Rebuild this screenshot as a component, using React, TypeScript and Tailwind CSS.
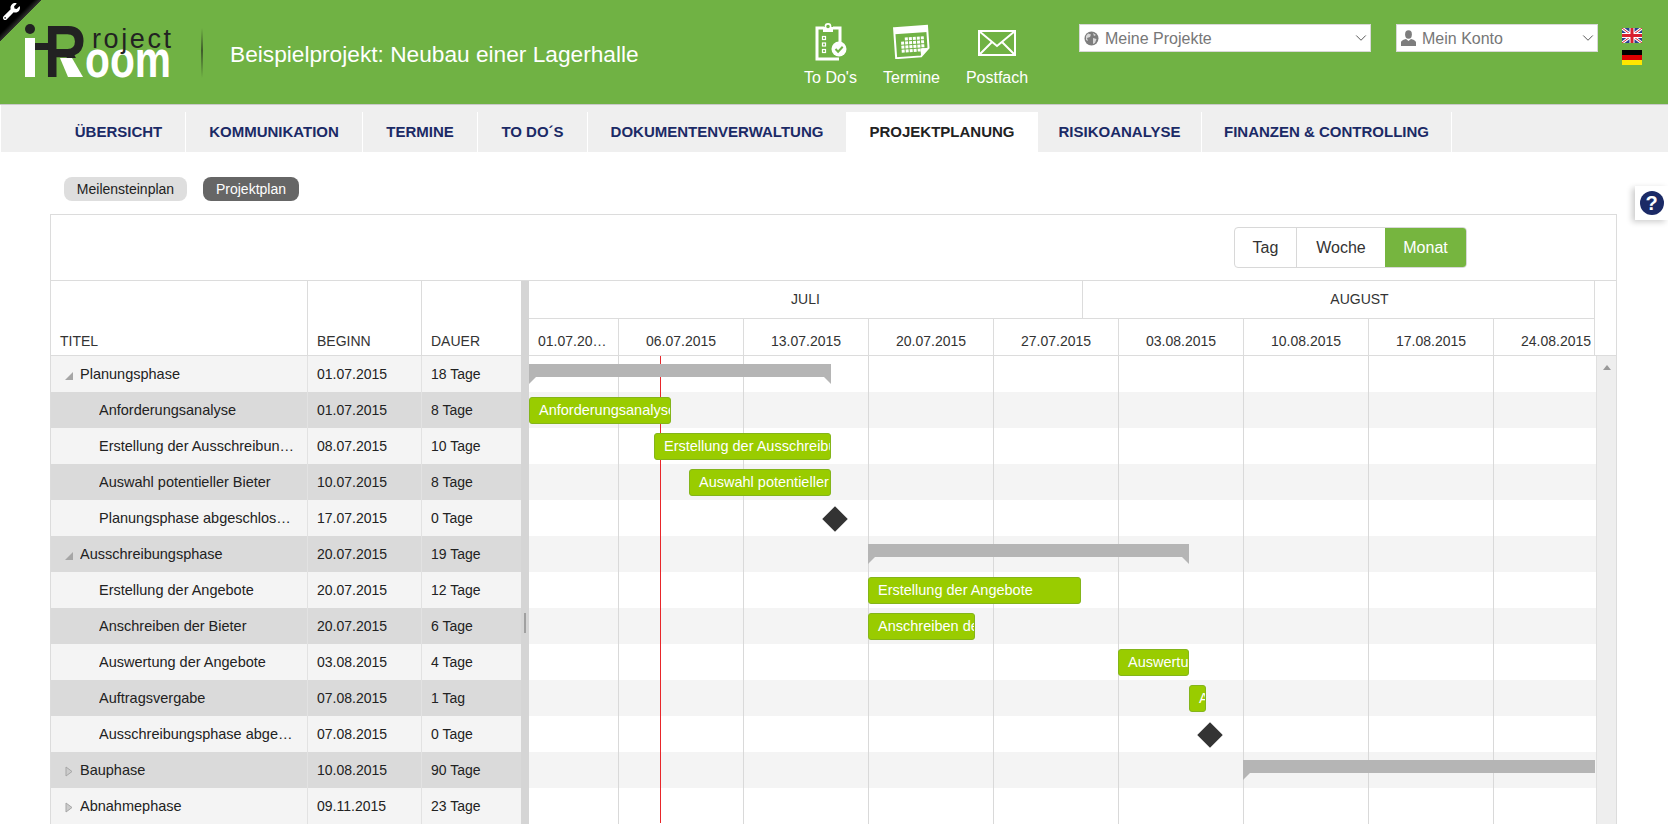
import React from "react";
import { ChevronDown } from "lucide-react";
import { FaWrench } from "react-icons/fa";

const tabs = [
  { label: "ÜBERSICHT", width: "w-[134px]" },
  { label: "KOMMUNIKATION", width: "w-[177px]" },
  { label: "TERMINE", width: "w-[115px]" },
  { label: "TO DO´S", width: "w-[110px]" },
  { label: "DOKUMENTENVERWALTUNG", width: "w-[259px]" },
  { label: "PROJEKTPLANUNG", width: "w-[191px]", active: true },
  { label: "RISIKOANALYSE", width: "w-[164px]" },
  { label: "FINANZEN & CONTROLLING", width: "w-[250px]" },
];

const rows = [
  { title: "Planungsphase", start: "01.07.2015", days: "18 Tage", open: true, summary: [0, 302, true] },
  { title: "Anforderungsanalyse", start: "01.07.2015", days: "8 Tage", bar: [0, 142] },
  { title: "Erstellung der Ausschreibungsunterlagen", start: "08.07.2015", days: "10 Tage", bar: [125, 177] },
  { title: "Auswahl potentieller Bieter", start: "10.07.2015", days: "8 Tage", bar: [160, 142] },
  { title: "Planungsphase abgeschlossen", start: "17.07.2015", days: "0 Tage", diamond: 297 },
  { title: "Ausschreibungsphase", start: "20.07.2015", days: "19 Tage", open: true, summary: [339, 321, true] },
  { title: "Erstellung der Angebote", start: "20.07.2015", days: "12 Tage", bar: [339, 213] },
  { title: "Anschreiben der Bieter", start: "20.07.2015", days: "6 Tage", bar: [339, 107] },
  { title: "Auswertung der Angebote", start: "03.08.2015", days: "4 Tage", bar: [589, 71] },
  { title: "Auftragsvergabe", start: "07.08.2015", days: "1 Tag", bar: [660, 17] },
  { title: "Ausschreibungsphase abgeschlossen", start: "07.08.2015", days: "0 Tage", diamond: 672 },
  { title: "Bauphase", start: "10.08.2015", days: "90 Tage", closed: true, summary: [714, 352, false] },
  { title: "Abnahmephase", start: "09.11.2015", days: "23 Tage", closed: true },
];

const dates = ["06.07.2015", "13.07.2015", "20.07.2015", "27.07.2015", "03.08.2015", "10.08.2015", "17.08.2015"];

function Logo() {
  return (
    <svg width="152" height="60" viewBox="0 0 152 60" className="mt-[22px] ml-[24px] shrink-0" fontFamily="'Liberation Sans', sans-serif">
      <defs>
        <clipPath id="r-top">
          <polygon points="0,0 70,0 70,36 35,36 35,60 0,60" />
        </clipPath>
      </defs>
      <circle cx="6" cy="7" r="5" fill="#222" />
      <rect x="1" y="16" width="10" height="39" fill="#fff" />
      <rect x="11" y="21" width="14" height="7" fill="#222" />
      <g clipPath="url(#r-top)">
        <text x="0" y="0" fontSize="74" fontWeight="700" fill="#222" transform="translate(20,55) scale(0.8,1)">R</text>
      </g>
      <polygon points="36,36 48,36 59,55 44,55" fill="#fff" />
      <text x="61" y="55" fontSize="52" fontWeight="700" fill="#fff" textLength="86" lengthAdjust="spacingAndGlyphs">oom</text>
      <text x="68" y="26" fontSize="27" fill="#222" textLength="79" lengthAdjust="spacing">roject</text>
    </svg>
  );
}

function ClipboardIcon() {
  return (
    <svg width="32" height="38" viewBox="0 0 32 38" fill="none" stroke="#fff">
      <path d="M9 5H2v31h22" strokeWidth="3" />
      <path d="M18 5h7v15" strokeWidth="3" />
      <rect x="8" y="4" width="10" height="5" fill="#fff" strokeWidth="0" />
      <circle cx="13" cy="3.5" r="2.6" fill="#70b244" strokeWidth="1.6" />
      <rect x="7.5" y="13.5" width="3" height="3" strokeWidth="1.2" />
      <rect x="7.5" y="20" width="3" height="3" strokeWidth="1.2" />
      <rect x="7.5" y="26.5" width="3" height="3" strokeWidth="1.2" />
      <circle cx="24" cy="26" r="7.5" fill="#fff" strokeWidth="0" />
      <path d="M20.5 26l2.6 2.8 4.6-5" stroke="#70b244" strokeWidth="2" />
    </svg>
  );
}

function CalendarIcon() {
  const cells = [];
  for (let r = 0; r < 4; r++) {
    for (let c = 0; c < 6; c++) {
      if (r === 0 && c === 0) continue;
      cells.push(<rect key={r + "-" + c} x={8 + c * 4} y={14 + r * 4} width="3" height="3" fill="#fff" />);
    }
  }
  return (
    <svg width="38" height="36" viewBox="0 0 38 36">
      <g transform="rotate(-4 19 18)">
        <path d="M2 4h33v22l-8 8H2z" fill="none" stroke="#fff" strokeWidth="2" />
        <rect x="2" y="4" width="33" height="6" fill="#fff" />
        <path d="M27 34v-8h8z" fill="#fff" />
        {cells}
      </g>
    </svg>
  );
}

function EnvelopeIcon() {
  return (
    <svg width="38" height="26" viewBox="0 0 38 26" fill="none" stroke="#fff" strokeWidth="2">
      <rect x="1" y="1" width="36" height="24" />
      <path d="M1 1l18 15L37 1M1 25l13-13M37 25L24 12" />
    </svg>
  );
}

function GlobeIcon() {
  return (
    <svg width="15" height="15" viewBox="0 0 15 15" className="shrink-0">
      <circle cx="7.5" cy="7.5" r="7" fill="#7d7d7d" />
      <path d="M4 2.5l3 1-1 2.5-3 1 1 3-2-1V5zM9 7l3.5 1-1.5 4-2 1zM9 2l3 2-2 1z" fill="#d8d8d8" />
    </svg>
  );
}

function UserIcon() {
  return (
    <svg width="15" height="16" viewBox="0 0 15 16" className="shrink-0">
      <ellipse cx="7.5" cy="4.5" rx="3.4" ry="4.2" fill="#7d7d7d" />
      <path d="M0 16v-3.5C0 10.5 3 9.500 5 9l2.500 2L10 9c2 .5 5 1.500 5 3.500V16z" fill="#7d7d7d" />
    </svg>
  );
}

function Dropdown({ label, icon, width }: { label: string; icon: React.ReactNode; width: string }) {
  return (
    <div className={"flex h-[28px] shrink-0 items-center gap-[6px] border border-[#d8d8d8] bg-white pl-[4px] text-[16px] text-[#777] " + width}>
      {icon}
      <span className="flex-1 pt-[2px]">{label}</span>
      <ChevronDown size={18} strokeWidth={1.3} className="text-[#555]" />
    </div>
  );
}

function Flags() {
  return (
    <div className="ml-[24px] flex w-[20px] shrink-0 flex-col gap-[7px] pt-[28px]">
      <svg width="20" height="15" viewBox="0 0 20 15">
        <rect width="20" height="15" fill="#2a3f8f" />
        <path d="M0 0l20 15M20 0L0 15" stroke="#fff" strokeWidth="3" />
        <path d="M0 0l20 15M20 0L0 15" stroke="#d8202f" strokeWidth="1" />
        <path d="M10 0v15M0 7.500h20" stroke="#fff" strokeWidth="5" />
        <path d="M10 0v15M0 7.500h20" stroke="#d8202f" strokeWidth="3" />
      </svg>
      <svg width="20" height="15" viewBox="0 0 20 15">
        <rect width="20" height="5" fill="#000" />
        <rect y="5" width="20" height="5" fill="#dd0000" />
        <rect y="10" width="20" height="5" fill="#ffe600" />
      </svg>
    </div>
  );
}

function Header() {
  return (
    <header className="relative flex h-[105px] border-b border-[#c9c9c9] bg-[#70b244]">
      <div className="absolute top-0 left-0 h-[42px] w-[42px] bg-[linear-gradient(135deg,#000_0%,#000_40%,#333_50%,transparent_50%)]">
        <FaWrench size={17} className="absolute top-[3px] left-[3px] -scale-x-100 rotate-90 text-white" />
      </div>
      <Logo />
      <div className="mt-[28px] ml-[25px] h-[50px] w-[2px] shrink-0 bg-[linear-gradient(to_bottom,transparent,#3f5c2c_45%,transparent)]" />
      <div className="mt-[41px] ml-[27px] w-[409px] shrink-0 text-[22.7px] leading-[26px] whitespace-nowrap text-white">
        Beispielprojekt: Neubau einer Lagerhalle
      </div>
      <div className="mt-[23px] ml-[165px] flex w-[224px] shrink-0 justify-between text-[16px] text-white">
        <div className="flex w-[53px] flex-col items-center">
          <div className="flex h-[40px] items-start"><ClipboardIcon /></div>
          <span className="mt-[3px] whitespace-nowrap">To Do's</span>
        </div>
        <div className="flex w-[57px] flex-col items-center">
          <div className="flex h-[40px] items-start"><CalendarIcon /></div>
          <span className="mt-[3px] whitespace-nowrap">Termine</span>
        </div>
        <div className="flex w-[62px] flex-col items-center">
          <div className="flex h-[40px] items-center"><EnvelopeIcon /></div>
          <span className="mt-[3px] whitespace-nowrap">Postfach</span>
        </div>
      </div>
      <div className="mt-[24px] ml-[51px] flex items-start gap-[25px]">
        <Dropdown label="Meine Projekte" icon={<GlobeIcon />} width="w-[292px]" />
        <Dropdown label="Mein Konto" icon={<UserIcon />} width="w-[202px]" />
      </div>
      <Flags />
    </header>
  );
}

function Nav() {
  return (
    <nav className="flex h-[47px] items-end border-l border-white bg-[#efefef] pl-[51px]">
      {tabs.map((t) => (
        <div
          key={t.label}
          className={
            "flex h-[40px] items-center justify-center border-r border-white text-[15px] font-bold whitespace-nowrap " +
            t.width +
            (t.active ? " bg-white text-[#222]" : " text-[#1b2a66]")
          }
        >
          {t.label}
        </div>
      ))}
    </nav>
  );
}

function Arrow({ open }: { open: boolean }) {
  if (open) {
    return (
      <svg width="8" height="8" viewBox="0 0 8 8" className="mt-[3px] mr-[7px] ml-[14px] shrink-0">
        <path d="M0 8L8 0v8z" fill="#a6a6a6" />
      </svg>
    );
  }
  return (
    <svg width="8" height="11" viewBox="0 0 8 11" className="mt-[3px] mr-[7px] ml-[14px] shrink-0">
      <path d="M1 1l6 4.500-6 4.500z" fill="#ccc" stroke="#a6a6a6" />
    </svg>
  );
}

function TableRow({ row, index }: { row: (typeof rows)[number]; index: number }) {
  const isGroup = row.open || row.closed;
  return (
    <div className={"flex h-[36px] items-center text-[14px] text-[#222] " + (index % 2 ? "bg-[#dadada]" : "bg-[#f4f4f4]")}>
      <div className="flex h-full w-[257px] items-center border-r border-[#e2e2e2] text-[14.5px]">
        {isGroup ? <Arrow open={!!row.open} /> : <div className="w-[48px] shrink-0" />}
        <span className="truncate pt-[2px] pr-[9px]">{row.title}</span>
      </div>
      <div className="flex h-full w-[114px] items-center border-r border-[#e2e2e2] pl-[9px]">{row.start}</div>
      <div className="flex h-full w-[99px] items-center pl-[9px]">{row.days}</div>
    </div>
  );
}

function TimelineRow({ row, index }: { row: (typeof rows)[number]; index: number }) {
  const bar = row.bar;
  const summary = row.summary;
  return (
    <div className={"relative h-[36px] " + (index % 2 ? "bg-[#f4f4f4]" : "bg-white")}>
      {summary && (
        <div className="absolute top-[8px] z-[2] h-[13px] bg-[#b5b5b5]" style={{ left: summary[0] as number, width: summary[1] as number }}>
          <div className="absolute top-[13px] left-0 border-t-[7px] border-r-[7px] border-t-[#b5b5b5] border-r-transparent" />
          {summary[2] && (
            <div className="absolute top-[13px] right-0 border-t-[7px] border-l-[7px] border-t-[#b5b5b5] border-l-transparent" />
          )}
        </div>
      )}
      {bar && (
        <div
          className="absolute top-[5px] z-[2] flex h-[27px] items-center overflow-hidden rounded-[3px] border border-[#84b51a] bg-[#99cc00] pl-[9px] text-[14.5px] whitespace-nowrap text-white"
          style={{ left: bar[0], width: bar[1] }}
        >
          {row.title}
        </div>
      )}
      {row.diamond !== undefined && (
        <div className="absolute top-[10px] z-[2] h-[18px] w-[18px] rotate-45 bg-[#333]" style={{ left: row.diamond }} />
      )}
    </div>
  );
}

function GridLines() {
  return (
    <div className="absolute top-0 bottom-0 left-0 z-[1] flex">
      <div className="w-[90px] border-r border-[#d9d9d9]" />
      {dates.map((d) => (
        <div key={d} className="w-[125px] border-r border-[#d9d9d9]" />
      ))}
    </div>
  );
}

function Gantt() {
  return (
    <section className="mt-[13px] ml-[50px] w-[1567px] border border-[#dcdcdc] bg-white">
      <div className="flex h-[66px] justify-end border-b border-[#dcdcdc] pt-[12px] pr-[149px]">
        <div className="flex h-[41px] overflow-hidden rounded-[4px] border border-[#d8d8d8] text-[16px] text-[#333]">
          <div className="flex w-[62px] items-center justify-center border-r border-[#d8d8d8]">Tag</div>
          <div className="flex w-[88px] items-center justify-center">Woche</div>
          <div className="flex w-[81px] items-center justify-center bg-[#76b53f] text-white">Monat</div>
        </div>
      </div>
      <div className="flex">
        <div className="w-[470px] shrink-0">
          <div className="flex h-[75px] items-end border-b border-[#dcdcdc] text-[14px] text-[#333]">
            <div className="h-full w-[257px] border-r border-[#dcdcdc] pt-[50px] pl-[9px]">TITEL</div>
            <div className="h-full w-[114px] border-r border-[#dcdcdc] pt-[50px] pl-[9px]">BEGINN</div>
            <div className="h-full w-[99px] pt-[50px] pl-[9px]">DAUER</div>
          </div>
          {rows.map((r, i) => (
            <TableRow key={r.title} row={r} index={i} />
          ))}
        </div>
        <div className="relative w-[8px] shrink-0 bg-[#d5d5d5]">
          <div className="absolute top-[332px] left-[3px] h-[20px] w-[2px] bg-[#a0a0a0]" />
        </div>
        <div className="w-[1087px] shrink-0">
          <div className="h-[75px] border-b border-[#dcdcdc] text-[14px] text-[#333]">
            <div className="flex h-[38px] w-[1066px] border-r border-b border-[#dcdcdc]">
              <div className="flex w-[554px] items-center justify-center border-r border-[#dcdcdc]">JULI</div>
              <div className="flex flex-1 items-center justify-center pl-[42px]">AUGUST</div>
            </div>
            <div className="flex h-[36px] w-[1066px] border-r border-[#dcdcdc]">
              <div className="w-[90px] shrink-0 truncate border-r border-[#dcdcdc] pt-[12px] pr-[9px] pl-[9px]">01.07.2015 00:00</div>
              {dates.map((d) => (
                <div key={d} className="w-[125px] shrink-0 border-r border-[#dcdcdc] pt-[12px] text-center">{d}</div>
              ))}
              <div className="w-[100px] shrink-0 overflow-hidden pt-[12px] pl-[27px] whitespace-nowrap">24.08.2015</div>
            </div>
          </div>
          <div className="flex">
            <div className="relative w-[1067px] shrink-0">
              {rows.map((r, i) => (
                <TimelineRow key={r.title} row={r} index={i} />
              ))}
              <GridLines />
              <div className="absolute top-0 bottom-[1px] left-[131px] z-[1] w-px bg-[#e8262a]" />
            </div>
            <div className="flex w-[20px] shrink-0 justify-center border-l border-[#e0e0e0] bg-[#eeeeee] pt-[9px]">
              <div className="h-0 w-0 border-r-[4px] border-b-[5px] border-l-[4px] border-r-transparent border-b-[#999] border-l-transparent" />
            </div>
          </div>
        </div>
      </div>
    </section>
  );
}

export default function App() {
  return (
    <div className="relative h-[824px] w-[1668px] overflow-hidden bg-white font-['Liberation_Sans',Arial,sans-serif]">
      <Header />
      <Nav />
      <div className="flex gap-[16px] pt-[25px] pl-[64px] text-[14px]">
        <div className="flex h-[24px] w-[123px] items-center justify-center rounded-[8px] bg-[#dedede] text-[#222]">Meilensteinplan</div>
        <div className="flex h-[24px] w-[96px] items-center justify-center rounded-[8px] bg-[#666] text-white">Projektplan</div>
      </div>
      <Gantt />
      <div className="absolute top-[186px] right-0 flex h-[34px] w-[33px] items-center justify-center bg-white shadow-[-3px_2px_6px_rgba(0,0,0,0.2)]">
        <div className="flex h-[24px] w-[24px] items-center justify-center rounded-full bg-[#1b2a66] text-[20px] font-bold text-white">?</div>
      </div>
    </div>
  );
}
